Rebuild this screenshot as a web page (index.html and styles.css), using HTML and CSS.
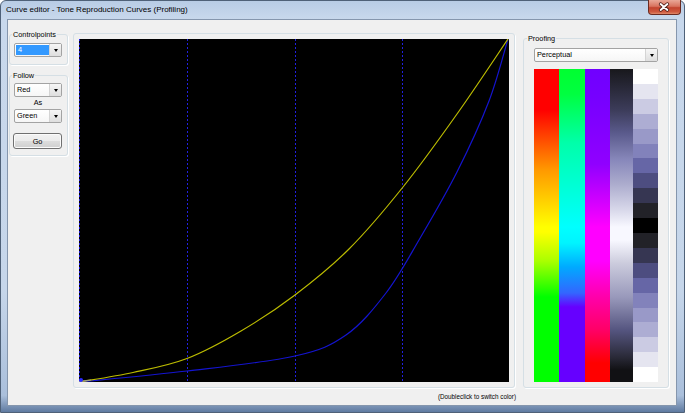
FILE: index.html
```html
<!DOCTYPE html>
<html lang="en">
<head>
  <meta charset="UTF-8">
  <title>Curve editor</title>
  <link rel="stylesheet" href="styles.css">
</head>
<body>
  <div class="window">
    <div class="titlebar">
      <span class="title">Curve editor - Tone Reproduction Curves (Profiling)</span>
      <div class="close">
        <svg width="33" height="15" viewBox="0 0 33 15">
          <path d="M13 4 L20 10 M20 4 L13 10" stroke="#4a1a14" stroke-width="3.6" stroke-linecap="round"/>
          <path d="M13 4 L20 10 M20 4 L13 10" stroke="#fff" stroke-width="2" stroke-linecap="round"/>
        </svg>
      </div>
    </div>

    <div class="client">
      <div class="side">
        <fieldset class="group points">
          <legend>Controlpoints</legend>
          <div class="combo"><span class="val"><span class="sel">4</span></span><span class="arrow"></span></div>
        </fieldset>

        <fieldset class="group follow">
          <legend>Follow</legend>
          <div class="combo"><span class="val">Red</span><span class="arrow"></span></div>
          <div class="as">As</div>
          <div class="combo"><span class="val">Green</span><span class="arrow"></span></div>
          <button class="btn">Go</button>
        </fieldset>
      </div>

      <div class="main">
        <div class="group graph">
          <svg class="plot" width="430" height="343" viewBox="0 0 430 343">
            <rect width="430" height="343" fill="#000"/>
            <g stroke="#2020e0" stroke-width="1" stroke-dasharray="2 2" shape-rendering="crispEdges">
              <line x1="0.5" y1="0" x2="0.5" y2="343"/>
              <line x1="108.5" y1="0" x2="108.5" y2="343"/>
              <line x1="216.5" y1="0" x2="216.5" y2="343"/>
              <line x1="323.5" y1="0" x2="323.5" y2="343"/>
            </g>
            <path fill="none" stroke="#1414d0" stroke-width="1.2"
              d="M0,343 C18,341.2 72,336.3 108,332 C144,327.7 189.5,323 216,317 C242.5,311 251.8,306.5 267,296 C282.2,285.5 294.8,269.8 307,254 C319.2,238.2 328.2,221.2 340,201 C351.8,180.8 366.3,156.2 378,133 C389.7,109.8 401.5,84.2 410,62 C418.5,39.8 425.8,10.3 429,0"/>
            <path fill="none" stroke="#bcbc00" stroke-width="1.2"
              d="M0,343 C9,341.4 36,337.4 54,333.5 C72,329.6 90,326.4 108,319.5 C126,312.6 144,302.6 162,292 C180,281.4 198,269.7 216,256 C234,242.3 252,228 270,210 C288,192 306,170.5 324,148 C342,125.5 360.5,99.7 378,75 C395.5,50.3 420.5,12.5 429,0"/>
            <line x1="0" y1="342.5" x2="12" y2="341" stroke="#9a9a9a" stroke-width="1"/>
            <circle cx="2" cy="341" r="2" fill="#2a2aff"/>
          </svg>
        </div>
        <div class="hint">(Doubleclick to switch color)</div>
      </div>

      <fieldset class="group proof">
        <legend>Proofing</legend>
        <div class="combo"><span class="val">Perceptual</span><span class="arrow"></span></div>
        <div class="bars">
          <div class="bar red"></div>
          <div class="bar green"></div>
          <div class="bar purple"></div>
          <div class="bar gray"></div>
          <div class="steps">
            <span class="s0"></span><span class="s1"></span><span class="s2"></span><span class="s3"></span>
            <span class="s4"></span><span class="s5"></span><span class="s6"></span><span class="s7"></span>
            <span class="s8"></span><span class="s9"></span><span class="s10"></span>
            <span class="s9"></span><span class="s8"></span><span class="s7"></span><span class="s6"></span>
            <span class="s5"></span><span class="s4"></span><span class="s3"></span><span class="s2"></span>
            <span class="s1"></span><span class="s0"></span>
          </div>
        </div>
      </fieldset>
    </div>
  </div>
</body>
</html>
```

FILE: styles.css
```css
html, body {
  margin: 0;
  padding: 0;
  background: #fff;
  font-family: "Liberation Sans", Arial, sans-serif;
}

.window {
  width: 685px;
  height: 413px;
  box-sizing: border-box;
  border: 1px solid #4f6178;
  border-radius: 6px 6px 0 0;
  display: flex;
  flex-direction: column;
  background: linear-gradient(180deg, #b8cce5 0px, #c8d8ec 18px, #c6d6ea 70%, #aabfdb 96%, #5f7aa0 100%);
}

.titlebar {
  height: 18px;
  display: flex;
  align-items: flex-start;
  padding-left: 5px;
}

.title {
  font-size: 8px;
  line-height: 18px;
  color: #000;
}

.close {
  margin-left: auto;
  margin-right: 3px;
  margin-top: -1px;
  width: 33px;
  height: 15px;
  box-sizing: border-box;
  border: 1px solid #6b2a20;
  border-top: none;
  border-radius: 0 0 4px 4px;
  background: linear-gradient(180deg, #e9a898 0%, #d8735f 45%, #c2432e 55%, #cf5a40 85%, #e08a6a 100%);
  display: flex;
}

.close svg {
  display: block;
  margin-left: -1px;
}

.client {
  flex: 1;
  margin: 0 7px 6px 6px;
  border: 1px solid #8596ad;
  background: #f0f0f0;
  display: flex;
  align-items: flex-start;
  font-size: 7.3px;
  color: #000;
}

/* group boxes */
.group {
  margin: 0;
  border: 1px solid #d5dfe5;
  border-radius: 3px;
  box-shadow: 1px 1px 0 #fff;
  min-width: 0;
}

.group legend {
  padding: 0 1px;
  margin-left: -2px;
  font-size: 7.3px;
  line-height: 9px;
}

.side {
  margin-left: 1px;
  margin-top: 10px;
  width: 59px;
}

.points {
  padding: 4px 5px 7px 4px;
}

.follow {
  margin-top: 6px;
  padding: 3px 5px 6px 4px;
}

.as {
  height: 12px;
  line-height: 12px;
  text-align: center;
}

.combo {
  height: 14px;
  box-sizing: border-box;
  border: 1px solid #a3a3a3;
  border-radius: 2px;
  background: linear-gradient(180deg, #ffffff, #f6f6f6);
  display: flex;
}

.combo .val {
  flex: 1;
  padding-left: 2px;
  line-height: 12px;
  overflow: hidden;
}

.combo .sel {
  display: block;
  margin: 1px 0 1px -1px;
  padding-left: 2px;
  line-height: 10px;
  background: #3399ff;
  color: #fff;
}

.combo .arrow {
  width: 11px;
  border-left: 1px solid #d4d4d4;
  background: linear-gradient(180deg, #f6f6f6, #dedede);
  display: flex;
  align-items: center;
  justify-content: center;
}

.combo .arrow::after {
  content: "";
  border-left: 2.5px solid transparent;
  border-right: 2.5px solid transparent;
  border-top: 3px solid #000;
}

.btn {
  display: block;
  margin: 10px 0 0 -1px;
  width: 49px;
  height: 16px;
  padding: 0;
  border: 1px solid #707070;
  border-radius: 3px;
  background: linear-gradient(180deg, #f2f2f2 0%, #ebebeb 50%, #dddddd 51%, #cfcfcf 100%);
  box-shadow: inset 0 0 0 1px #fbfbfb;
  font-family: "Liberation Sans", Arial, sans-serif;
  font-size: 7.3px;
  color: #000;
}

/* curve area */
.main {
  margin-left: 5px;
  margin-top: 13px;
  width: 442px;
}

.graph {
  padding: 5px;
}

.plot {
  display: block;
}

.hint {
  margin-top: 4px;
  margin-right: -1px;
  text-align: right;
  font-size: 6.3px;
  line-height: 10px;
}

/* proofing */
.proof {
  margin-left: 8px;
  margin-top: 14px;
  width: 146px;
  box-sizing: border-box;
  padding: 5px 10px 5px 10px;
}

.proof legend {
  margin-left: -7px;
}

.bars {
  margin-top: 7px;
  height: 313px;
  display: flex;
}

.bar { height: 100%; }

.red {
  width: 25px;
  background: linear-gradient(180deg, #ff0000 0px, #ff0000 41px, #ff9900 101px, #ffff00 158px, #ffff00 163px, #aaff00 192px, #00ff00 228px, #00ff00 313px);
}

.green {
  width: 26px;
  background: linear-gradient(180deg, #00ff30 0px, #00ff40 25px, #00ffaa 74px, #00ffff 158px, #00f4ff 174px, #00aaff 198px, #3366ff 224px, #6600ff 238px, #6600ff 313px);
}

.purple {
  width: 25px;
  background: linear-gradient(180deg, #7000ff 0px, #7600ff 28px, #9000ff 95px, #ff00ff 158px, #ff00ff 192px, #ff00aa 228px, #ff0066 261px, #ff0000 294px, #ff0000 313px);
}

.gray {
  width: 23px;
  background: linear-gradient(180deg, #18181c 0px, #3c3c5a 41px, #5a5a8c 64px, #8888bb 91px, #aaaacc 114px, #d8d8ea 141px, #f8f8ff 158px, #f8f8ff 171px, #ccccdd 194px, #9999bb 228px, #555580 261px, #2a2a38 288px, #111114 301px, #111114 313px);
}

.steps {
  width: 25px;
  display: flex;
  flex-direction: column;
}

.steps span { flex: 1; }

.s0 { background: #ffffff; }
.s1 { background: #e5e5f0; }
.s2 { background: #cbcbe3; }
.s3 { background: #adadd3; }
.s4 { background: #9999c8; }
.s5 { background: #8282bb; }
.s6 { background: #6666a6; }
.s7 { background: #4d4d80; }
.s8 { background: #363652; }
.s9 { background: #222228; }
.s10 { background: #000000; }
```
